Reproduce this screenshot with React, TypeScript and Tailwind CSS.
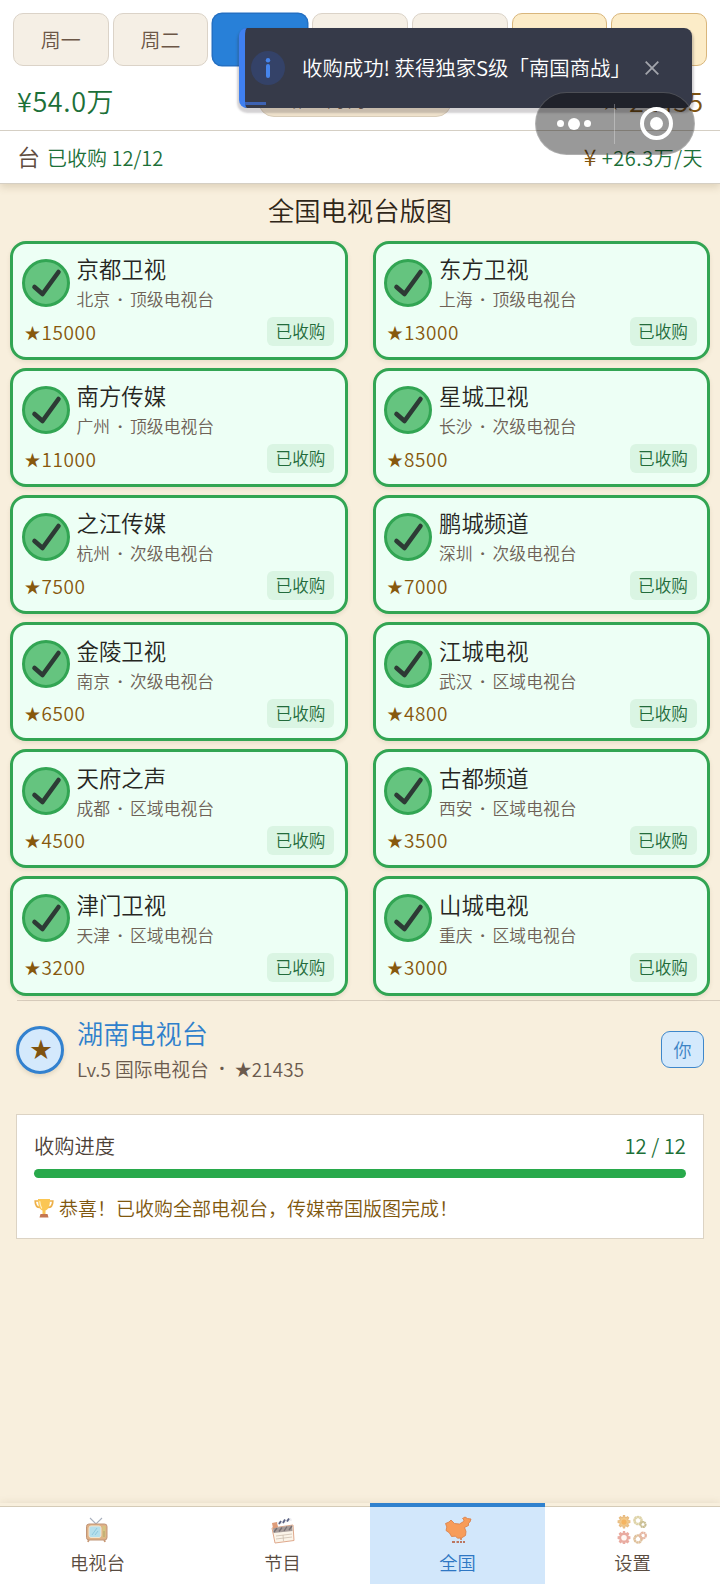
const days = ["周一", "周二", "周三", "周四", "周五", "周六", "周日"];

const stations = [
  { name: "京都卫视", city: "北京", tier: "顶级电视台", score: 15000 },
  { name: "东方卫视", city: "上海", tier: "顶级电视台", score: 13000 },
  { name: "南方传媒", city: "广州", tier: "顶级电视台", score: 11000 },
  { name: "星城卫视", city: "长沙", tier: "次级电视台", score: 8500 },
  { name: "之江传媒", city: "杭州", tier: "次级电视台", score: 7500 },
  { name: "鹏城频道", city: "深圳", tier: "次级电视台", score: 7000 },
  { name: "金陵卫视", city: "南京", tier: "次级电视台", score: 6500 },
  { name: "江城电视", city: "武汉", tier: "区域电视台", score: 4800 },
  { name: "天府之声", city: "成都", tier: "区域电视台", score: 4500 },
  { name: "古都频道", city: "西安", tier: "区域电视台", score: 3500 },
  { name: "津门卫视", city: "天津", tier: "区域电视台", score: 3200 },
  { name: "山城电视", city: "重庆", tier: "区域电视台", score: 3000 },
];

const GEAR = "M11 1h2l.6 3 2 .8L18 3l2 2-1.700 2.500.8 2L22 10v3l-3 .8-.8 2L20 18l-2 2-2.500-1.700-2 .8L13 22h-2l-.8-3-2-.8L6 20l-2-2 1.700-2.500-.8-2L2 13v-3l3-.6.8-2L4 5l2-2 2.500 1.800 2-.8z";

function Check() {
  return (
    <svg viewBox="0 0 48 48" className="size-12 shrink-0" fill="none">
      <path d="M12.500 28 20.500 35 36.500 13" stroke="#2d3a35" strokeWidth="4.600" strokeLinecap="round" strokeLinejoin="round" />
    </svg>
  );
}

function StationCard({ name, city, tier, score }: { name: string; city: string; tier: string; score: number }) {
  return (
    <div className="h-[119.2px] rounded-2xl border-3 border-[#32a553] bg-[#edfff5] pr-2 pl-[7.500px] pt-[9px] shadow-[0_2px_4px_rgba(90,70,30,0.1)]">
      <div className="flex h-[64px] gap-[7px]">
        <div className="mt-[6px] ml-px flex size-12 shrink-0 items-center justify-center rounded-full border-[3px] border-[#32a553] bg-[#65c47f]">
          <Check />
        </div>
        <div>
          <p className="pt-[0.500px] text-[22.4px] leading-[30px] text-[#26261f]">{name}</p>
          <p className="flex text-[16.8px] leading-[32px] text-[#6e6257]">
            {city}
            <span className="w-[20px] text-center font-['Open_Sans',sans-serif] font-bold">·</span>
            {tier}
          </p>
        </div>
      </div>
      <div className="flex items-center justify-between pr-[2.500px] pl-1">
        <span className="flex items-center text-[19px] leading-[30px] tracking-[0.6px] text-[#87580d]">
          <span className="w-[17px] text-[16px] tracking-normal">★</span>
          {score}
        </span>
        <span className="flex h-[29px] w-[67px] items-center justify-center rounded-[6px] bg-[#daf5e3] text-[16.600px] text-[#236b3b]">已收购</span>
      </div>
    </div>
  );
}

function TvIcon() {
  return (
    <svg viewBox="0 0 24 26" className="mr-[2px] h-[26px] w-6" fill="none">
      <path d="M5 1l6 6 6-6" stroke="#a9b0bd" strokeWidth="1.100" />
      <path d="M4 22l-1 3M19 22l1 3" stroke="#c99a76" strokeWidth="1.800" />
      <rect x="1.500" y="7" width="20.500" height="16" rx="2.500" fill="#dfb186" stroke="#c09579" />
      <rect x="4" y="9" width="12" height="11.500" rx="2" fill="#b5dfec" stroke="#f2e6d0" />
      <path d="M7 18l5-7M10 18l3-4" stroke="#8fc8dd" />
      <rect x="17.500" y="9" width="3" height="11.500" fill="#d4c581" />
      <path d="M18 15h2M18 17h2M18 19h2" stroke="#a98d62" strokeWidth=".7" />
    </svg>
  );
}

function ClapperIcon() {
  return (
    <svg viewBox="0 0 26 28" className="h-7 w-[26px]" fill="none">
      <path d="M2 12l21-3 1 15.500-19 2.500z" fill="#fbf4e9" stroke="#dfa98c" />
      <path d="M3 12l19-2.500.5 5.500-19 2z" fill="#a69c9a" />
      <path d="M4 16l3-4M9 15.500l3-4M14 15l3-4.500M19 14l3-4" stroke="#766f72" strokeWidth="1.300" />
      <path d="M2 7l5-1 1 5-5 1.500z" fill="#df9c79" />
      <path d="M7 6.500L21 2l1 2.500L8 9z" fill="#eeeef2" />
      <path d="M9 8l2-3M13 7l2-3.500M17 5.500l2-3" stroke="#5b6383" strokeWidth="1.800" />
      <path d="M6 20l16-2M6 23l16-2M13 19l.5 6" stroke="#c7b7a7" strokeWidth=".7" />
    </svg>
  );
}

function MapIcon() {
  return (
    <svg viewBox="0 0 28 28" className="size-7" fill="none">
      <path d="M1.500 7.500L5 6l2-2 3.500 3.500 5 .5 4-2.500L20 4l-1.500-1.500L21 1l2.500 1.500L27 3l-1 3-1.500 1v2.500l-4 2 1.500 4-.5 4-4 2.500-4 .2-2-2-4 .3-2-3.500-3.500-2.500L2.800 11z" fill="#f79c59" stroke="#d87c45" strokeWidth=".8" strokeLinejoin="round" />
      <path d="M17 22v2" stroke="#d87c45" strokeWidth="1.500" />
      <path d="M8 26h3M12.500 26h2.500M16 26h2M19 26h2" stroke="#bb7660" strokeWidth="1.800" />
    </svg>
  );
}

function GearsIcon() {
  return (
    <svg viewBox="0 0 30 29" className="mr-[1px] h-[29px] w-[30px]" fill="none">
      <svg x="0" y="0" width="14" height="14" viewBox="0 0 24 24">
        <path d={GEAR} fill="#f2ca8b" stroke="#e8bb80" strokeWidth="2" />
        <circle cx="12" cy="12" r="4.500" fill="#f5b461" />
      </svg>
      <circle cx="21" cy="5.500" r="3.500" stroke="#ded3a8" strokeWidth="2.600" strokeDasharray="2.200 .3" />
      <circle cx="26" cy="9.500" r="2.500" stroke="#c8bd91" strokeWidth="2.200" strokeDasharray="1.800 .3" />
      <svg x="0" y="16" width="14" height="14" viewBox="0 0 24 24">
        <path d={GEAR} fill="#e9aba0" stroke="#e9aba0" strokeWidth="2" />
        <circle cx="12" cy="11.500" r="4.800" fill="#fff8f3" />
      </svg>
      <circle cx="21" cy="24" r="3.500" stroke="#dfc09b" strokeWidth="2.500" strokeDasharray="2.200 .3" />
      <circle cx="26" cy="20.500" r="2.800" stroke="#e5b5a0" strokeWidth="2.300" strokeDasharray="1.900 .3" />
    </svg>
  );
}

function Trophy() {
  return (
    <svg viewBox="0 0 20 20" className="size-5" fill="none">
      <path d="M4.500 3H1.200c0 4 1.500 6.500 5 6.500M15.500 3h3.300c0 4-1.500 6.500-5 6.500" stroke="#edb049" strokeWidth="1.700" />
      <path d="M4 1h12c0 7-1.500 10.500-4.500 11.500V16h-3v-3.500C5.500 11.500 4 8 4 1z" fill="#fbc653" />
      <path d="M5.800 3.500c.2 3 .8 5 1.800 6.500" stroke="#fff0c5" strokeWidth="1.200" strokeLinecap="round" />
      <path d="M6.500 16h7l1 3.500h-9z" fill="#c57650" />
    </svg>
  );
}

const tabs = [
  { label: "电视台", icon: <TvIcon /> },
  { label: "节目", icon: <ClapperIcon /> },
  { label: "全国", icon: <MapIcon />, active: true },
  { label: "设置", icon: <GearsIcon /> },
];

function Toast() {
  return (
    <div className="absolute top-7 left-[239px] flex h-[79.500px] w-[453px] items-center rounded-lg border-l-[6px] border-[#3f7ff0] bg-[#363a49] shadow-[0_3px_2px_2px_rgba(60,50,60,0.22)]">
      <span className="ml-[6px] flex size-[34px] items-center justify-center rounded-full bg-[#344268]">
        <svg viewBox="0 0 6 20" className="h-5 w-[6px]" fill="#4685ed">
          <circle cx="3" cy="2.200" r="2.200" />
          <rect x="1" y="6" width="4" height="14" rx="2" />
        </svg>
      </span>
      <span className="ml-[17px] w-[336px] text-[20.400px] whitespace-nowrap text-white">收购成功! 获得独家S级「南国商战」</span>
      <svg viewBox="0 0 14 14" className="ml-[7px] size-[14px] shrink-0" stroke="#a3a5ac" strokeWidth="1.800">
        <path d="M.7.7l12.600 12.600M13.300.7L.7 13.300" />
      </svg>
      <span className="absolute bottom-[3px] left-0 h-[3px] w-[21px] bg-[#3d62b3]" />
    </div>
  );
}

function Capsule() {
  return (
    <div className="absolute top-[92px] left-[535px] flex h-[63px] w-40 items-center rounded-full border border-white/20 bg-black/40">
      <div className="flex flex-1 items-center justify-center gap-[4px] pr-[2px]">
        <span className="size-[7px] rounded-full bg-white" />
        <span className="size-3 rounded-full bg-white" />
        <span className="size-[7px] rounded-full bg-white" />
      </div>
      <span className="h-10 w-[1.500px] bg-white/30" />
      <div className="flex flex-1 justify-center pl-[3px]">
        <span className="flex size-[33px] items-center justify-center rounded-full border-4 border-white">
          <span className="size-[13px] rounded-full bg-white" />
        </span>
      </div>
    </div>
  );
}

export default function App() {
  return (
    <div className="relative flex h-[1584px] w-[720px] flex-col overflow-hidden bg-[#f8efdd] font-['Noto_Sans_CJK_SC',sans-serif] font-[350]">
      <header className="h-[184px] shrink-0 border-b border-[#d5cfc4] bg-white shadow-[0_3px_8px_rgba(110,85,40,0.2)]">
        <div className="flex gap-1 px-[13px] pt-[13px]">
          {days.map((d, i) => (
            <div
              key={d}
              className={`flex h-[53px] flex-1 items-center justify-center rounded-[10px] border text-[20px] ${
                i === 2
                  ? "border-[#2470c3] bg-[#2880d8] text-white ring-[0.5px] ring-[#2470c3]"
                  : i > 4
                    ? "border-[#d9b67c] bg-[#fcecc8] text-[#87580d]"
                    : "border-[#dbd3c8] bg-[#f5efe5] text-[#6b5646]"
              }`}
            >
              {d}
            </div>
          ))}
        </div>
        <div className="flex h-[65px] items-center justify-between border-b border-[#d5cfc4] px-[17px] pt-[4px] text-[27px]">
          <span className="w-60 pt-[2px] tracking-[0.6px] text-[#1c7038]">¥54.0万</span>
          <span className="mr-[10px] flex h-[34px] w-[194px] items-center rounded-2xl border border-[#d9cdb9] bg-[#efe2cc] pl-3 text-[17px] text-[#6b5646]">
            ★ 第12周 周三
          </span>
          <span className="flex w-60 items-center justify-end gap-[8px] pt-[2px] text-[#80530f]">
            <span className="text-[20px]">★</span>21435
          </span>
        </div>
        <div className="flex h-[52px] items-center justify-between px-[17px] pt-[2px] text-[20px]">
          <span className="flex items-center text-[#1c7038]">
            <span className="mr-[7px] pb-[3px] text-[23px] text-[#5f4c40]">台</span>已收购 12/12
          </span>
          <span className="flex items-center tracking-[0.500px] text-[#1c7038]">
            <span className="mr-[5px] pb-[3px] text-[23px] leading-none text-[#80530f]">¥</span>+26.3万/天
          </span>
        </div>
      </header>

      <main className="flex-1">
        <h1 className="h-[56.500px] pt-[6px] text-center text-[26.300px] leading-[40px] text-[#2f2618]">全国电视台版图</h1>
        <div className="grid grid-cols-2 gap-x-[25px] gap-y-2 px-[10px]">
          {stations.map((s) => (
            <StationCard key={s.name} {...s} />
          ))}
        </div>

        <div className="mt-1 ml-[17px] border-t border-[#d8cdbd]" />
        <div className="flex h-[99px] items-center px-4 pb-px">
          <div className="flex size-12 items-center justify-center rounded-full border-[3px] border-[#3281cf] bg-[#d4e9fc] text-[22px] text-[#80530f] shadow-[0_2px_4px_rgba(90,70,30,0.15)]">
            <span className="pb-[5px] pl-[2px]">★</span>
          </div>
          <div className="ml-[13px] flex-1 pt-[2px]">
            <p className="text-[26.200px] leading-[36px] text-[#2f80cc]">湖南电视台</p>
            <p className="flex items-center text-[18.800px] leading-[35px] text-[#6b5a4d]">
              Lv.5 国际电视台
              <span className="w-[26px] text-center font-['Open_Sans',sans-serif] font-bold">·</span>
              <span className="w-[17px] text-[17px]">★</span>
              <span className="tracking-[0.2px]">21435</span>
            </p>
          </div>
          <span className="flex h-[37px] w-[43px] items-center justify-center rounded-[9px] border-[1.500px] border-[#3e87cb] bg-[#d4e9fc] pb-px text-[18px] text-[#3c83c4]">
            你
          </span>
        </div>

        <div className="mx-4 mt-[14px] h-[125px] border border-[#dcd3c4] bg-white px-[17px] pt-[15px]">
          <div className="flex justify-between text-[20.300px] leading-[30px]">
            <span className="text-[#4d4138]">收购进度</span>
            <span className="text-[#1c7038]">12 / 12</span>
          </div>
          <div className="mt-[9px] h-[9px] rounded-full bg-[#28a94b]" />
          <div className="mt-[15px] flex items-center gap-[5px] text-[19px] leading-[30px] text-[#80580f]">
            <Trophy />
            恭喜！已收购全部电视台，传媒帝国版图完成！
          </div>
        </div>
      </main>

      <nav className="flex h-[81px] shrink-0 bg-linear-to-b from-transparent from-[3px] to-white to-[3px] shadow-[0_0_8px_rgba(110,85,40,0.12)]">
        {tabs.map((t, i) => (
          <div
            key={t.label}
            className={`flex flex-col items-center ${i === 0 ? "w-[195px]" : "w-[175px]"} ${
              t.active
                ? "border-t-4 border-[#3081ce] bg-[#d2e7fb] text-[#2f77c3]"
                : "mt-[3px] border-t border-[#d5cbb7] bg-white text-[#594b40]"
            }`}
          >
            <div className="mt-[6px] flex h-[33px] items-center">{t.icon}</div>
            <span className="text-[18.300px] leading-[32px]">{t.label}</span>
          </div>
        ))}
      </nav>

      <Toast />
      <Capsule />
    </div>
  );
}
